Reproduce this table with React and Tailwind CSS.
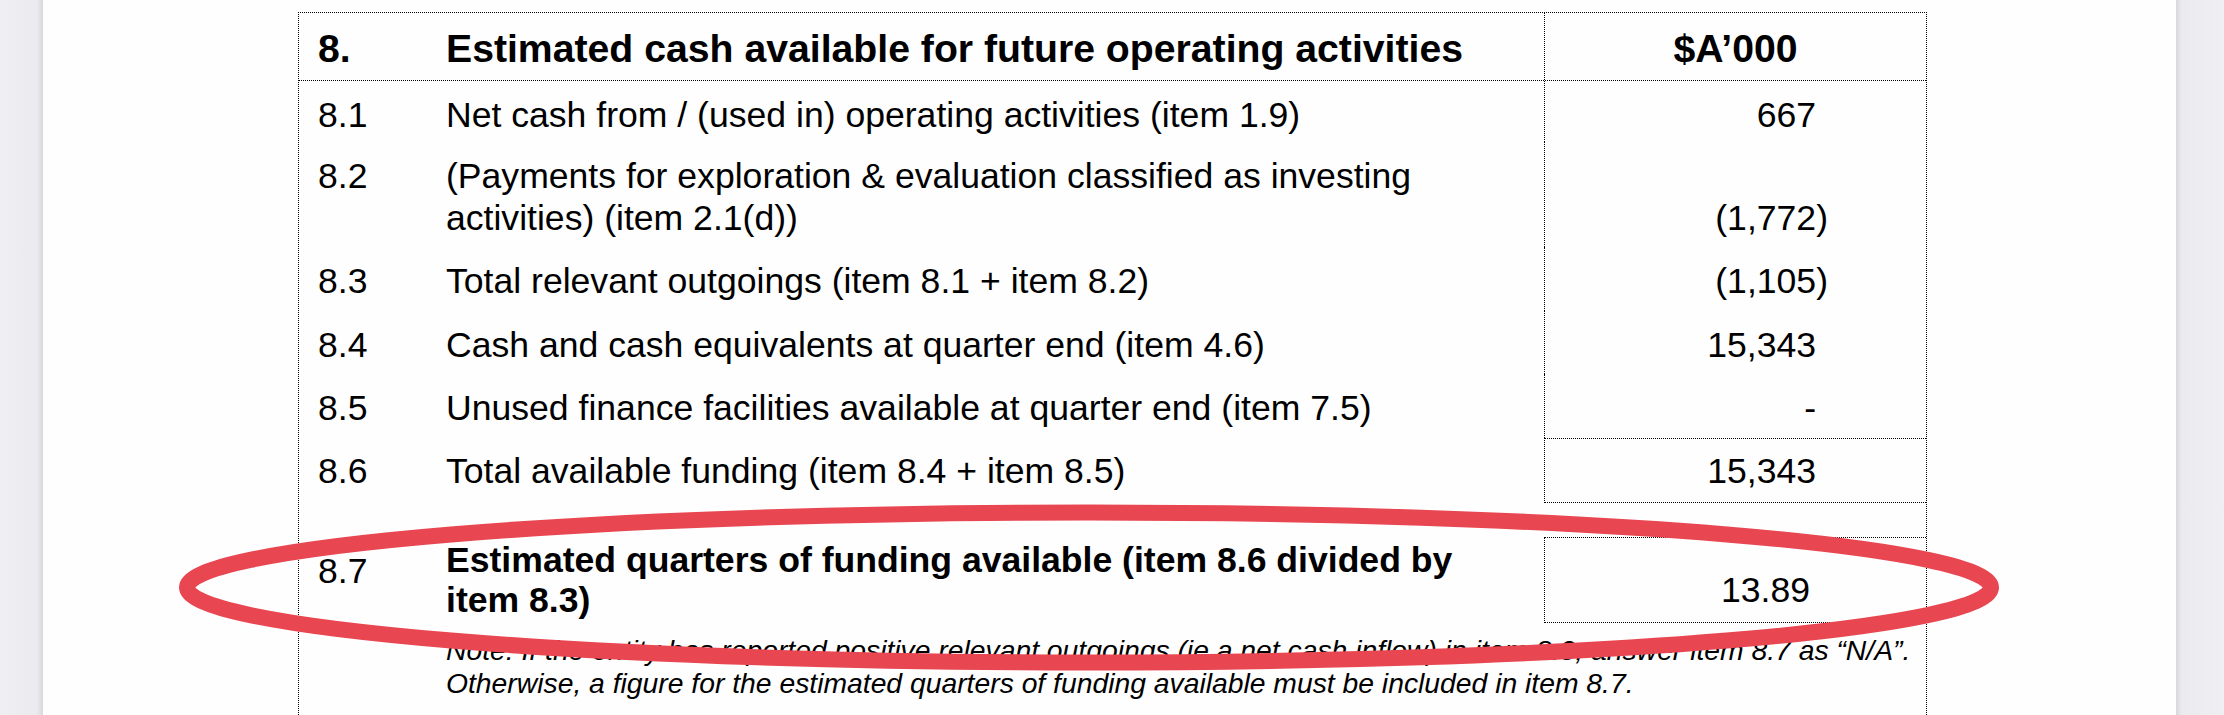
import React from "react";

const rows = [
  { n: "8.1", d: ["Net cash from / (used in) operating activities (item 1.9)"], v: "667", h: "h-[61px]" },
  {
    n: "8.2",
    d: ["(Payments for exploration & evaluation classified as investing", "activities) (item 2.1(d))"],
    v: "(1,772",
    neg: true,
    h: "h-[105px]",
    low: true,
  },
  { n: "8.3", d: ["Total relevant outgoings (item 8.1 + item 8.2)"], v: "(1,105", neg: true, h: "h-[64px]" },
  { n: "8.4", d: ["Cash and cash equivalents at quarter end (item 4.6)"], v: "15,343", h: "h-[63px]" },
  { n: "8.5", d: ["Unused finance facilities available at quarter end (item 7.5)"], v: "-", h: "h-[64px]" },
];

function Value({ v, neg }) {
  return (
    <span>
      {v}
      {neg && <span className="mr-[-12px]">)</span>}
    </span>
  );
}

export default function App() {
  return (
    <div className="relative w-[2224px] h-[715px] overflow-hidden flex bg-[#eeeef2] font-['Liberation_Sans',Arial,sans-serif] text-black">
      <div className="w-[43px] shrink-0 h-full bg-[linear-gradient(to_right,#efeff3_0%,#ebebef_86%,#d8d8dc_100%)]" />
      <div className="w-[2133px] shrink-0 h-full bg-[#fefefe] flex flex-col">
        <div className="ml-[255px] mt-[12px] w-[1629px] flex-1 border-t border-l border-r border-dotted border-black flex flex-col">
          {/* header */}
          <div className="flex h-[68px] shrink-0 border-b border-dotted border-black text-[39.2px] leading-[45px] font-bold">
            <div className="w-[147px] shrink-0 pl-[19px] pt-[13px]">8.</div>
            <div className="flex-1 pt-[13px] whitespace-nowrap">Estimated cash available for future operating activities</div>
            <div className="w-[382px] shrink-0 border-l border-dotted border-black pt-[13px] text-center">$A’000</div>
          </div>

          {/* body rows */}
          <div className="text-[35.6px] leading-[42px]">
            {rows.map((r) => (
              <div key={r.n} className={`flex ${r.h}`}>
                <div className="w-[147px] shrink-0 pl-[19px] pt-[13px]">{r.n}</div>
                <div className="flex-1 pt-[13px] whitespace-nowrap">
                  {r.d.map((line, i) => (
                    <div key={i}>{line}</div>
                  ))}
                </div>
                <div
                  className={`w-[382px] shrink-0 border-l border-dotted border-black text-right pr-[110px] ${
                    r.low ? "pt-[55px]" : "pt-[13px]"
                  }`}
                >
                  <Value v={r.v} neg={r.neg} />
                </div>
              </div>
            ))}

            {/* 8.6 */}
            <div className="flex h-[65px]">
              <div className="w-[147px] shrink-0 pl-[19px] pt-[12px]">8.6</div>
              <div className="flex-1 pt-[12px] whitespace-nowrap">Total available funding (item 8.4 + item 8.5)</div>
              <div className="w-[382px] shrink-0 border-l border-t border-b border-dotted border-black text-right pr-[110px] pt-[11px]">
                15,343
              </div>
            </div>

            {/* 8.7 */}
            <div className="flex h-[120px]">
              <div className="w-[147px] shrink-0 pl-[19px] pt-[47px]">8.7</div>
              <div className="flex-1 pt-[37px] font-bold leading-[40px] whitespace-nowrap">
                <div>Estimated quarters of funding available (item 8.6 divided by</div>
                <div>item 8.3)</div>
              </div>
              <div className="w-[382px] shrink-0 pt-[34px]">
                <div className="h-[86px] border-l border-t border-b border-dotted border-black text-right pr-[116px] pt-[31px]">
                  13.89
                </div>
              </div>
            </div>

            {/* note */}
            <div className="pl-[147px] pt-[11px] italic text-[28.3px] leading-[33px] whitespace-nowrap">
              <div>Note: If the entity has reported positive relevant outgoings (ie a net cash inflow) in item 8.3, answer item 8.7 as “N/A”.</div>
              <div>Otherwise, a figure for the estimated quarters of funding available must be included in item 8.7.</div>
            </div>
          </div>
        </div>
      </div>
      <div className="flex-1 h-full bg-[linear-gradient(to_right,#d8d8dc_0%,#ebebef_12%,#efeff3_100%)]" />

      <svg className="absolute inset-0 pointer-events-none" width="2224" height="715" viewBox="0 0 2224 715">
        <ellipse cx="1089" cy="587.5" rx="902" ry="75" fill="none" stroke="#e84650" strokeWidth="16" />
      </svg>
    </div>
  );
}
